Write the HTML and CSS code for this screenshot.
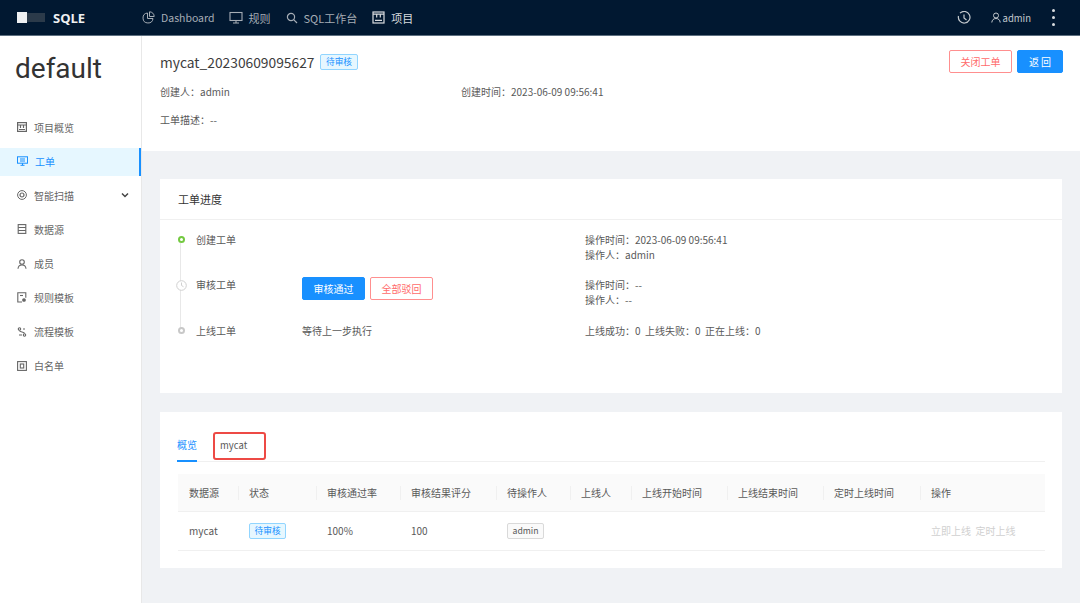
FILE: index.html
```html
<!DOCTYPE html>
<html lang="en">
  <head>
    <meta charset="UTF-8" />
    <meta name="viewport" content="width=device-width, initial-scale=1.0" />
    <title>SQLE</title>
    <link rel="stylesheet" href="styles.css">
  </head>

  <body>
    <header class="topbar">
      <div class="logo">
        <span class="logo-box"></span>
        <span class="logo-blur"></span>
        <span class="logo-text">SQLE</span>
      </div>
      <nav class="top-nav">
        <a class="top-link top-dash">
          <svg width="13" height="13" viewBox="0 0 13 13" fill="none" stroke="currentColor" stroke-width="1"><path d="M5.5 2a5 5 0 1 0 5.5 5.5H5.5z"/><path d="M7.5.8v4.7h4.7A4.7 4.7 0 0 0 7.5.8z"/></svg>
          Dashboard
        </a>
        <a class="top-link top-rule">
          <svg width="14" height="13" viewBox="0 0 14 13" fill="none" stroke="currentColor" stroke-width="1.1"><rect x="1" y="1.5" width="12" height="8"/><path d="M7 9.5v2.5M4 12h6"/></svg>
          规则
        </a>
        <a class="top-link top-sql">
          <svg width="12" height="12" viewBox="0 0 12 12" fill="none" stroke="currentColor" stroke-width="1.2"><circle cx="5" cy="5" r="3.6"/><path d="M7.7 7.7l3.3 3.3"/></svg>
          SQL工作台
        </a>
        <a class="top-link top-project">
          <svg width="13" height="13" viewBox="0 0 13 13" fill="none" stroke="currentColor" stroke-width="1.2"><rect x="1" y="1" width="11" height="11"/><path d="M1 3.200h11M4.700 3.200v3.300M8.300 3.200v3.300M3 9.300h7"/></svg>
          项目
        </a>
      </nav>
      <div class="top-right">
        <svg class="top-clock" width="14" height="14" viewBox="0 0 14 14" fill="none" stroke="currentColor" stroke-width="1.2"><path d="M3 2.200A5.800 5.800 0 1 1 1.500 5"/><path d="M7 3.500V7l2.500 2"/></svg>
        <span class="top-user">
          <svg width="10" height="11" viewBox="0 0 10 11" fill="none" stroke="currentColor" stroke-width="1"><circle cx="5" cy="3.500" r="2.500"/><path d="M.8 10.500C1 8 2.500 6.500 5 6.500s4 1.500 4.200 4"/></svg>
          admin
        </span>
        <span class="top-more"><i></i><i></i><i></i></span>
      </div>
    </header>

    <div class="page">
      <aside class="sidebar">
        <div class="project-name">default</div>
        <ul class="menu">
          <li class="menu-item">
            <svg width="10" height="10" viewBox="0 0 10 10" fill="none" stroke="currentColor" stroke-width="1.200"><rect x=".6" y=".6" width="8.800" height="8.800"/><path d="M.6 3h8.800M3.500 3v3M6.500 3v3M2 7.500h6"/></svg>
            项目概览
          </li>
          <li class="menu-item active">
            <svg width="11" height="10" viewBox="0 0 11 10" fill="none" stroke="currentColor" stroke-width="1"><rect x=".5" y=".8" width="10" height="6.400"/><path d="M3 3h5M3 5h5M5.500 7.200v2M3.500 9.300h4"/></svg>
            工单
          </li>
          <li class="menu-item">
            <svg width="10" height="10" viewBox="0 0 10 10" fill="none" stroke="currentColor" stroke-width="1"><circle cx="5" cy="5" r="4.400"/><circle cx="5" cy="5" r="2" stroke-width="1.200"/></svg>
            智能扫描
            <svg class="menu-arrow" width="8" height="6" viewBox="0 0 8 6" fill="none" stroke="currentColor" stroke-width="1.500"><path d="M1 1.500l3 3 3-3"/></svg>
          </li>
          <li class="menu-item">
            <svg width="10" height="10" viewBox="0 0 10 10" fill="none" stroke="currentColor" stroke-width="1.100"><rect x="1.200" y=".6" width="7.600" height="8.800"/><path d="M1.200 3.500h7.600M1.200 6.500h7.600"/></svg>
            数据源
          </li>
          <li class="menu-item">
            <svg width="10" height="10" viewBox="0 0 10 10" fill="none" stroke="currentColor" stroke-width="1.100"><circle cx="5" cy="3" r="2.300"/><path d="M1 9.800C1.200 7.300 2.800 6 5 6s3.800 1.300 4 3.800"/></svg>
            成员
          </li>
          <li class="menu-item">
            <svg width="10" height="11" viewBox="0 0 10 11" fill="none" stroke="currentColor" stroke-width="1.100"><path d="M5 10H.8V.8h8v5"/><path d="M3 3.500h3"/><circle cx="7" cy="8" r="1.300" fill="currentColor"/></svg>
            规则模板
          </li>
          <li class="menu-item">
            <svg width="10" height="10" viewBox="0 0 10 10" fill="none" stroke="currentColor" stroke-width="1.100"><circle cx="2.500" cy="2" r="1.200"/><circle cx="7.500" cy="8" r="1.200"/><path d="M2.500 3.500c0 2 5 1 5 3M6 2h2M2 8h3"/></svg>
            流程模板
          </li>
          <li class="menu-item">
            <svg width="10" height="10" viewBox="0 0 10 10" fill="none" stroke="currentColor" stroke-width="1.100"><rect x=".6" y=".6" width="8.800" height="8.800"/><rect x="3.300" y="3" width="3.400" height="4"/></svg>
            白名单
          </li>
        </ul>
      </aside>

      <main class="content">
        <section class="order-head">
          <div class="order-info">
            <div class="order-title">
              <h1>mycat_20230609095627</h1>
              <span class="tag tag-blue">待审核</span>
            </div>
            <div class="order-meta">
              <span class="meta-owner">创建人：admin</span>
              <span>创建时间：2023-06-09 09:56:41</span>
            </div>
            <div class="order-desc">工单描述：--</div>
          </div>
          <div class="order-btns">
            <button class="btn btn-danger">关闭工单</button>
            <button class="btn btn-primary btn-back">返 回</button>
          </div>
        </section>

        <section class="card card-progress">
          <div class="card-title">工单进度</div>
          <div class="steps">
            <div class="step step-one">
              <span class="step-axis"><span class="dot dot-green"></span></span>
              <span class="step-name">创建工单</span>
              <span class="step-action"></span>
              <div class="step-info">
                <div>操作时间：2023-06-09 09:56:41</div>
                <div>操作人：admin</div>
              </div>
            </div>
            <div class="step step-two">
              <span class="step-axis">
                <svg class="step-clock" width="11" height="11" viewBox="0 0 11 11" fill="#fff" stroke="#d0d0d0" stroke-width="1"><circle cx="5.500" cy="5.500" r="4.800"/><path d="M5.500 2.500v3l2 1.200" fill="none"/></svg>
              </span>
              <span class="step-name">审核工单</span>
              <span class="step-action step-btns">
                <button class="btn btn-primary">审核通过</button>
                <button class="btn btn-danger">全部驳回</button>
              </span>
              <div class="step-info">
                <div>操作时间：--</div>
                <div>操作人：--</div>
              </div>
            </div>
            <div class="step step-three">
              <span class="step-axis"><span class="dot dot-gray"></span></span>
              <span class="step-name">上线工单</span>
              <span class="step-action">等待上一步执行</span>
              <div class="step-info">上线成功：0&nbsp; 上线失败：0&nbsp; 正在上线：0</div>
            </div>
          </div>
        </section>

        <section class="card card-result">
          <div class="tabs">
            <span class="tab tab-active">概览</span>
            <span class="tab tab-mark">mycat</span>
          </div>
          <table class="result-table">
            <colgroup>
              <col class="col-60"><col class="col-78"><col class="col-84"><col class="col-96"><col class="col-74">
              <col class="col-61"><col class="col-96"><col class="col-96"><col class="col-97"><col>
            </colgroup>
            <thead>
              <tr>
                <th>数据源</th><th>状态</th><th>审核通过率</th><th>审核结果评分</th><th>待操作人</th>
                <th>上线人</th><th>上线开始时间</th><th>上线结束时间</th><th>定时上线时间</th><th>操作</th>
              </tr>
            </thead>
            <tbody>
              <tr>
                <td>mycat</td>
                <td><span class="tag tag-blue">待审核</span></td>
                <td>100%</td>
                <td>100</td>
                <td><span class="tag tag-gray">admin</span></td>
                <td></td><td></td><td></td><td></td>
                <td class="disabled">立即上线&nbsp; 定时上线</td>
              </tr>
            </tbody>
          </table>
        </section>
      </main>
    </div>
  </body>
</html>
```

FILE: styles.css
```css
* {
  box-sizing: border-box;
}

body {
  margin: 0;
  height: 603px;
  overflow: hidden;
  background-color: #f0f2f5;
  color: #595959;
  font-family: "Noto Sans CJK SC", "Noto Sans", sans-serif;
  font-size: 10px;
}

/* top bar */
.topbar {
  display: flex;
  align-items: center;
  height: 36px;
  padding-left: 17px;
  background-color: #011831;
  border-bottom: 1px solid #5d6f80;
  color: #a6adb5;
}

.logo {
  display: flex;
  align-items: center;
  width: 125px;
}

.logo-box {
  width: 10px;
  height: 11px;
  background-color: #eef0f2;
}

.logo-blur {
  width: 18px;
  height: 9px;
  margin-right: 8px;
  background-color: #2b3a4a;
}

.logo-text {
  color: #eef0f2;
  font-family: "Open Sans", sans-serif;
  font-size: 13px;
  font-weight: 700;
}

.top-nav {
  display: flex;
  align-items: center;
}

.top-link {
  display: flex;
  align-items: center;
  font-size: 11px;
}

.top-dash {
  font-size: 10.5px;
}

.top-dash svg {
  margin-right: 6px;
}

.top-rule {
  margin-left: 14px;
}

.top-rule svg {
  margin-right: 6px;
}

.top-sql {
  margin-left: 15px;
}

.top-sql svg {
  margin-right: 6px;
}

.top-project {
  margin-left: 15px;
  color: #d9dcdf;
}

.top-project svg {
  margin-right: 6px;
}

.top-right {
  display: flex;
  align-items: center;
  margin-left: auto;
  padding-right: 25px;
  color: #c3c8cd;
}

.top-user {
  display: flex;
  align-items: center;
  gap: 2px;
  margin-left: 20px;
  font-size: 9.5px;
}

.top-more {
  display: flex;
  flex-direction: column;
  gap: 4px;
  margin-left: 21px;
}

.top-more i {
  width: 3px;
  height: 3px;
  border-radius: 50%;
  background-color: #d9dcdf;
}

/* sidebar */
.page {
  display: flex;
  height: 567px;
}

.sidebar {
  flex: none;
  width: 142px;
  background-color: #fff;
  border-right: 1px solid #e8e8e8;
}

.project-name {
  height: 78px;
  padding: 13px 0 0 15px;
  color: #333;
  font-family: Roboto, sans-serif;
  font-size: 28px;
  line-height: 40px;
}

.menu {
  margin: 0;
  padding: 0;
  list-style: none;
}

.menu-item {
  display: flex;
  align-items: center;
  gap: 7px;
  height: 28px;
  margin-bottom: 6.15px;
  padding-bottom: 2px;
  padding-left: 17px;
  color: #666;
}

.menu-item.active {
  background-color: #e6f7ff;
  border-right: 2px solid #1890ff;
  color: #1890ff;
}

.menu-arrow {
  margin-left: auto;
  margin-right: 12px;
  color: #444;
}

/* head of the order */
.content {
  flex: 1;
}

.order-head {
  display: flex;
  justify-content: space-between;
  height: 115px;
  padding: 14px 17px 0 18px;
  background-color: #fff;
}

.order-info {
  flex: 1;
}

.order-title {
  display: flex;
  align-items: center;
  height: 24px;
}

.order-title h1 {
  margin: 0 6px 0 0;
  color: #3d3d3d;
  font-size: 13.8px;
  font-weight: 400;
}

.order-meta {
  display: flex;
  margin-top: 10px;
  line-height: 16px;
}

.meta-owner {
  width: 301px;
}

.order-desc {
  margin-top: 12px;
  line-height: 16px;
}

.order-btns {
  display: flex;
  gap: 5px;
}

.tag {
  display: inline-block;
  height: 16px;
  padding: 0 4.500px;
  border: 1px solid;
  border-radius: 2px;
  font-size: 8.7px;
  line-height: 14px;
}

.tag-blue {
  background-color: #e6f7ff;
  border-color: #91d5ff;
  color: #1890ff;
}

.tag-gray {
  background-color: #fafafa;
  border-color: #d9d9d9;
  color: #595959;
}

.btn {
  width: 63px;
  height: 23px;
  padding: 0;
  border: 1px solid;
  border-radius: 2px;
  font-family: inherit;
  font-size: 10px;
}

.btn-primary {
  background-color: #1890ff;
  border-color: #1890ff;
  color: #fff;
}

.btn-danger {
  background-color: #fff;
  border-color: #ff8f8f;
  color: #ff6b6b;
}

.btn-back {
  width: 46px;
}

/* cards */
.card {
  width: 902px;
  margin-left: 18px;
  background-color: #fff;
}

.card-progress {
  height: 214px;
  margin-top: 28px;
}

.card-title {
  height: 41px;
  padding-left: 18px;
  border-bottom: 1px solid #f0f0f0;
  color: #333;
  font-size: 11px;
  line-height: 41px;
}

.steps {
  padding: 12px 0 0 18px;
}

.step {
  position: relative;
  display: flex;
  line-height: 15px;
  height: 46px;
}

.step-one {
  height: 45px;
}

.step-axis {
  position: relative;
  flex: none;
  display: flex;
  justify-content: center;
  width: 6px;
  margin-right: 12px;
  padding-top: 4px;
}

.step-one .step-axis::after,
.step-two .step-axis::after {
  content: "";
  position: absolute;
  top: 11px;
  left: 2px;
  width: 1px;
  height: 40px;
  background-color: #e8e8e8;
}

.dot {
  width: 7px;
  height: 7px;
  flex: none;
  border: 2px solid;
  border-radius: 50%;
  background-color: #fff;
}

.dot-green {
  border-color: #73c940;
}

.dot-gray {
  border-color: #c8c8c8;
}

.step-clock {
  position: relative;
  flex: none;
  z-index: 1;
  margin-top: -1px;
}

.step-name {
  flex: none;
  width: 106px;
}

.step-action {
  flex: none;
  width: 283px;
}

.step-btns {
  display: flex;
  gap: 5px;
  height: 23px;
}

.step-three {
  height: 30px;
}

/* tabs and table */
.card-result {
  height: 156px;
  margin-top: 19px;
  padding: 0 17px 0 18px;
}

.tabs {
  display: flex;
  align-items: flex-start;
  height: 50px;
  border-bottom: 1px solid #f0f0f0;
}

.tab {
  position: relative;
  height: 50px;
  padding-top: 25px;
  line-height: 16px;
}

.tab-active {
  margin-left: -1px;
  border-bottom: 2px solid #1890ff;
  color: #1890ff;
}

.tab-mark {
  margin-left: 23px;
  font-size: 9.5px;
}

/* red mark drawn over the screenshot */
.tab-mark::after {
  content: "";
  position: absolute;
  top: 20px;
  left: -7px;
  width: 49px;
  height: 24px;
  border: 2px solid #ed4a45;
  border-radius: 3px;
}

.result-table {
  width: 100%;
  margin-top: 12px;
  border-collapse: collapse;
  table-layout: fixed;
}

.col-60 { width: 60px; }
.col-61 { width: 61px; }
.col-74 { width: 74px; }
.col-78 { width: 78px; }
.col-84 { width: 84px; }
.col-96 { width: 96px; }
.col-97 { width: 97px; }

.result-table th {
  position: relative;
  height: 37px;
  padding: 0 0 0 11px;
  background-color: #fafafa;
  border-bottom: 1px solid #f0f0f0;
  color: #595959;
  font-weight: 400;
  text-align: left;
}

.result-table th + th::before {
  content: "";
  position: absolute;
  top: 12px;
  left: 0;
  width: 1px;
  height: 14px;
  background-color: #f0f0f0;
}

.result-table td {
  height: 39px;
  padding: 0 0 0 11px;
  border-bottom: 1px solid #f0f0f0;
}

.disabled {
  color: #d0d0d0;
}
```
